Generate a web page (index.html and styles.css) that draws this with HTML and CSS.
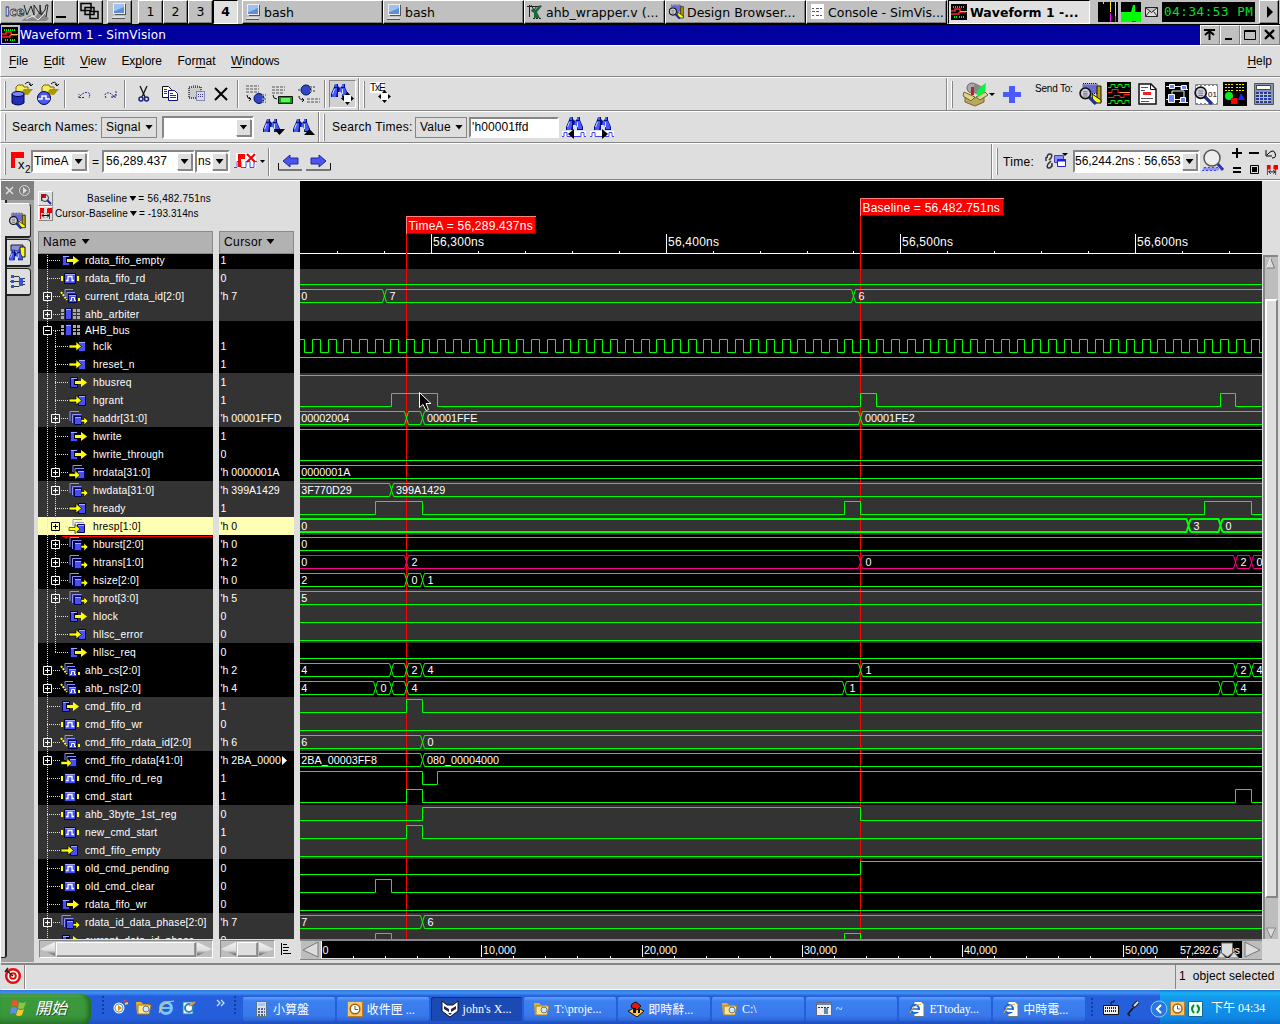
FILE: index.html
```
<!DOCTYPE html>
<html lang="zh-Hant">
<head>
<meta charset="utf-8">
<title>Waveform 1 - SimVision</title>
<link rel="stylesheet" href="styles.css">
</head>
<body>
<svg class="defs" width="0" height="0">
  <symbol id="pc" viewBox="0 0 16 16"><path fill="#eee" d="M2 0h12v11H2z"/><path fill="#5c8fd8" d="M3 1h10v9H3z"/><path fill="#9cc0f0" d="M3 1h10v3L4 8H3z"/><path fill="#555" d="M14 1h1v10h-1zM4 11h11v1H4z"/><path fill="#ddd" d="M2 13h11l1 2H1z"/><path stroke="#555" d="M1 15.500h13"/></symbol>
  <symbol id="wavei" viewBox="0 0 24 24"><path d="M0 0h24v24H0z"/><path fill="none" stroke="#0e0" d="M1 5.500h3v-3h4v3h3v-3h4v3h3v-3h4v3M1 21.500h3v-3h4v3h3v-3h4v3h3v-3h4v3"/><path fill="none" stroke="#f22" d="M1 10.500h4v-3h6v3h6M1 15.500h6v-2h6v2h4v-3h6"/><path stroke="#fa4" d="M13 10.500h10"/></symbol>
  <symbol id="wmini" viewBox="0 0 16 16"><path d="M0 0h16v16H0z"/><path stroke="#0e0" stroke-width="2" stroke-dasharray="1 1" d="M2 3h12M3 13h3M8 13h5"/><path fill="none" stroke="#f22" stroke-width="1.500" d="M0 7h4V5h5v3h6M0 10h8v-2"/><path stroke="#fa4" d="M9 7.500h7"/></symbol>
  <symbol id="bino" viewBox="0 0 17 15"><path fill="#001080" d="M4 1h3v2l2 2 2-2V1h3v3l3 7v3h-6V9H7v5H0v-3l3-7z"/><path fill="#4858ff" d="M4 1h2v3H4zM11 1h2v3h-2zM3 5h3v4l-1 5H1v-3zM9 5h5l2 6v2h-4l-2-4H8z"/><path stroke="#cde" d="M3.500 6l-2 5M11.500 6v5"/></symbol>
  <symbol id="mag" viewBox="0 0 17 17"><path stroke="#223090" stroke-width="3" d="M9 9l7 7"/><circle cx="6" cy="6" r="5" fill="#ccd" stroke="#111" stroke-width="1.500"/><path stroke="#777" d="M4 4.500h4M4 6.500h4M4 8.500h4"/></symbol>
  <symbol id="dbr" viewBox="0 0 24 24"><path fill="#99c" stroke="#111" stroke-dasharray="1 1" d="M5 1.500h14v10H5z"/><path fill="#6a6ad0" d="M6 3h12v8H6z"/><path fill="#b8a000" stroke="#111" d="M19 4h4v16h-4z"/><path fill="#ff0" stroke="#111" d="M14 12l9 6v3h-8z"/><use href="#mag" x="1" y="5" width="18" height="18"/></symbol>
  <symbol id="clock" viewBox="0 0 16 16"><path fill="#f4c870" stroke="#c07818" d="M.5.5h15v15H.5z"/><circle cx="8" cy="8" r="4.800" fill="#fff" stroke="#a06018" stroke-width="1.500"/><path fill="none" stroke="#805010" d="M8 5v3.500h3"/></symbol>
  <symbol id="fold" viewBox="0 0 16 16"><path fill="#e8b028" d="M0 2h5l2 2h6v10H1z"/><path fill="#ffe898" stroke="#b07a18" d="M2 5h13l-2 9H2z"/><circle cx="10" cy="9" r="3" fill="#cfeaff" stroke="#678"/></symbol>
  <symbol id="ie" viewBox="0 0 16 16"><path fill="#fff" stroke="#678" d="M5 .5h7l3 3v12H5z"/><circle cx="6" cy="8" r="4" fill="#fff" stroke="#1668d8" stroke-width="2"/><path stroke="#1668d8" stroke-width="1.500" d="M3 8h7"/><path stroke="#fff" stroke-width="2" d="M7 10h5"/><path fill="none" stroke="#e8b838" d="M1 12Q4 4 12 3"/></symbol>
  <symbol id="rflag" viewBox="0 0 13 13"><path fill="#e00" d="M1 1h4v5H2v6H1zM9 1h4v5h-2v6H10V6H8V2z"/><path stroke="#111" fill="none" d="M3 8.500h7M5 6.500l-2 2 2 2M8 6.500l2 2-2 2"/></symbol>
  <symbol id="mover" viewBox="0 0 13 13"><path fill="#fff" d="M3 3h7v7H3z"/><path d="M6.500 0L9 3H4zM6.500 13L9 10H4zM0 6.500L3 4v5zM13 6.500L10 4v5z"/></symbol>
</svg>

<div class="icebar">
  <div class="ib" style="width:53px"><svg width="51" height="22"><text x="4" y="15" class="logo1">Ice</text><path fill="#888" d="M20 20l9-6 4 3 7-8 8 9-3 2z"/><path fill="none" stroke="#222" d="M23 4l3 10 4-9 3 9V4l6 9V4l1 10 4-5 1-5h2l-2 12"/><path stroke="#eee" fill="none" d="M25 18l7-3 5 4 7-7"/></svg></div>
  <div class="ib" style="width:25px"><svg width="23" height="22"><path d="M2 15h10v2H2z"/></svg></div>
  <div class="ib" style="width:25px"><svg width="23" height="22"><g fill="#c0c0c0" stroke="#000" stroke-width="1.500"><path d="M2 2.500h10v7H2zM6 6.500h9v7H6zM11 10.500h8v7h-8z"/></g></svg></div>
  <div class="ib term"><svg width="23" height="22"><use href="#pc" x="3" y="2" width="16" height="16"/></svg></div>
  <div class="ib ws">1</div><div class="ib ws">2</div><div class="ib ws">3</div><div class="ib ws on">4</div>
  <div class="tasks">
    <div class="ib task"><svg width="16" height="16"><use href="#pc" width="16" height="16"/></svg>bash</div>
    <div class="ib task"><svg width="16" height="16"><use href="#pc" width="16" height="16"/></svg>bash</div>
    <div class="ib task"><svg width="16" height="16"><path stroke="#222" fill="none" d="M0 2.500h14M2.500 1v12M4 1l3 5 3-4"/><path fill="#176a35" d="M5 5l3 1 5-5 2 1-5 6 3 6H7V9L4 7z"/><path stroke="#222" stroke-dasharray="2 1" d="M6 14.500h8"/></svg>ahb_wrapper.v (...</div>
    <div class="ib task"><svg width="16" height="16"><use href="#dbr" width="16" height="16"/></svg>Design Browser...</div>
    <div class="ib task"><svg width="16" height="16"><path fill="#fff" d="M2 0h13v15H2z"/><path stroke="#557" stroke-dasharray="3 1" d="M3 4.500h2m2 0h6M3 7.500h8M3 11.500h2m2 0h6"/></svg>Console - SimVis...</div>
    <div class="ib task on"><svg width="16" height="16"><use href="#wmini" width="16" height="16"/></svg>Waveform 1 -...</div>
  </div>
  <div class="tray">
    <svg width="66" height="24"><path d="M5 2h20v20H5zM28 2h20v20H28z"/><path stroke="#ee0" d="M10.500 2v2M17.500 2v10M22.500 2v14"/><path stroke="#f0f" d="M17.500 13v9M22.500 16v6"/><path fill="#0f0" d="M28 12h10l2-7h2v7h6v10H28z"/><path stroke="#c00" d="M39 21.500h4"/><path fill="#ddd" stroke="#222" d="M52.500 7.500h12v9h-12zl6 5 6-5M52.500 16.500l4-5m8 5l-4-5"/></svg>
    <div class="iclock">04:34:53 PM</div>
    <div class="ib go"><svg width="18" height="22"><path d="M7 5l6 6-6 6z"/></svg></div>
  </div>
</div>

<div class="title"><svg width="19" height="19"><path fill="#c0c0c0" d="M0 0h19v19H0z"/><use href="#wmini" x="1" y="2" width="16" height="16"/></svg><span>Waveform 1 - SimVision</span>
  <div class="wb"><svg width="17" height="17"><path stroke="#000" stroke-width="2" fill="none" d="M3 4h11M8.500 5v9M4 9l4.500-4L13 9"/></svg></div>
  <div class="wb"><svg width="17" height="17"><path stroke="#000" stroke-width="2" d="M4 13h7"/></svg></div>
  <div class="wb"><svg width="17" height="17"><path stroke="#000" fill="none" d="M3.500 4.500h11v9h-11zM3.500 5.500h11"/></svg></div>
  <div class="wb"><svg width="17" height="17"><path stroke="#000" stroke-width="2.300" d="M4 4l9 9M13 4l-9 9"/></svg></div>
</div>

<div class="menu"><span><u>F</u>ile</span><span><u>E</u>dit</span><span><u>V</u>iew</span><span>Ex<u>p</u>lore</span><span>For<u>m</u>at</span><span><u>W</u>indows</span><span class="help"><u>H</u>elp</span></div>

<div class="bar bar1">
  <i class="grip"></i>
  <svg width="26" height="32" class="m5"><path fill="#f5ec60" stroke="#776800" d="M6 9l2-2h5l1 2h4v6H6z"/><path fill="#a89800" d="M10 16l4-5h9l-5 6z"/><path fill="none" stroke="#111" d="M15 6q4-4 6 1m-2-1l2 2 2-2"/><path fill="#2030b0" stroke="#000060" d="M2 16h12v9q-6 4-12 0z"/><ellipse cx="8" cy="16" rx="6" ry="2.500" fill="#7888f8" stroke="#000060"/></svg>
  <svg width="28" height="32"><path fill="#f5ec60" stroke="#776800" d="M6 9l2-2h5l1 2h4v6H6z"/><path fill="#a89800" d="M10 16l4-5h9l-5 6z"/><path fill="none" stroke="#111" d="M15 6q4-4 6 1m-2-1l2 2 2-2"/><circle cx="8" cy="20" r="6.500" fill="#4a5af0" stroke="#000060"/><path fill="none" stroke="#fff" stroke-width="1.500" d="M2 21h4v-3h4v3h4"/></svg>
  <i class="sep"></i>
  <svg width="58" height="32"><g fill="none" stroke="#28288c" stroke-dasharray="2 1"><path d="M13 20v-4M13 19.500h5M14 18q6-6 10-2l-1 4M40 20q-3-6 4-5l5 4M50 13v6h-5M50 16l-4 4"/></g></svg>
  <i class="sep"></i>
  <svg width="32" height="32"><path stroke="#111" stroke-width="1.300" fill="none" d="M14 8l5 11M21 8l-5 11"/><g fill="none" stroke="#202080" stroke-width="1.500"><circle cx="15" cy="21" r="2"/><circle cx="20.500" cy="21" r="2"/></g></svg>
  <svg width="27" height="32"><g fill="#fff" stroke="#111"><path d="M4.500 8.500h6l3 3v8h-9z"/><path stroke="#101080" d="M10.500 12.500h6l3 3v7h-9z"/></g><path stroke="#334" d="M6 11.500h3M6 13.500h3M6 15.500h3M12 15.500h3M12 17.500h6M12 19.500h6"/></svg>
  <svg width="25" height="32"><g stroke-dasharray="1 1" stroke="#555" fill="none"><path fill="#ccc" stroke-width="2" d="M4 9h12v11H4z"/><path stroke="#882" d="M8 7.500h5"/><path stroke="#338" fill="#ddd" d="M11.500 13.500h8v9h-8zM13 16.500h5M13 18.500h5"/></g></svg>
  <svg width="27" height="32"><path stroke="#000" stroke-width="2" d="M5 10l12 12M17 10L5 22"/></svg>
  <i class="sep"></i>
  <svg width="85" height="32"><g stroke="#999" stroke-width="2" stroke-dasharray="3 1"><path d="M7 8h13M7 11h13M7 14h13M33 9h13M33 12h13M33 15h12M68 21h13M68 24h13"/></g><g fill="#3048c8" stroke="#001060"><circle cx="20" cy="20.500" r="5"/><circle cx="67" cy="12" r="5"/></g><path stroke="#888" stroke-dasharray="2 1" stroke-width="2" d="M23 17h4m-4 4h4m-4 3h4M71 9h5m-5 4h5M59 12h3"/><path fill="none" stroke="#111" d="M8 17q0 4 4 4m-2-2l2 2-2 2M34 17q0 4 4 4M60 18q0 4 5 4m-2-2l2 2-2 2"/><path fill="#0a0" stroke="#111" d="M39.500 18.500h14v7h-14z"/><path fill="#6e6" d="M42 20h9v4h-9z"/></svg>
  <i class="sep"></i>
  <div class="press"><svg width="26" height="26"><use href="#bino" x="1" y="2" width="17" height="15"/><use href="#mover" x="11" y="11" width="13" height="13"/></svg></div>
  <i class="sep tall"></i><i class="grip m4"></i>
  <svg width="30" height="32"><path fill="#fff" d="M5 4h14v11H5z"/><text x="5" y="13" class="txe">TxE</text><use href="#mover" x="13" y="12" width="13" height="13"/></svg>
  <div class="right r1"><i class="sep tall"></i><i class="grip m4"></i>
    <svg width="46" height="32"><path fill="#b8a860" stroke="#776828" d="M8 16l10 4 9-4v8l-9 4-10-4z"/><path fill="#ddd090" stroke="#776828" d="M7 14l11 5-4 4-8-5zM19 19l9-5 3 3-8 5z"/><circle cx="15" cy="10" r="5" fill="#aaa" stroke="#666"/><path fill="#888" d="M18 5l6 3-3 9-6-3z"/><path fill="#1e4" d="M23 9l6-4-1 8-6 6-3-4z"/><path fill="#c02020" d="M14 9h3v8h-3z"/><path d="M32 15h6l-3 3z"/></svg>
    <svg width="32" height="32"><path fill="#4a5aff" d="M7 8h6v6h6v5h-6v6H7v-6H1v-5h6z" transform="translate(-1)"/></svg>
    <span class="send">Send To:</span>
    <svg width="29" height="32"><use href="#dbr" y="4" width="24" height="24"/></svg>
    <svg width="29" height="32"><use href="#wavei" y="4" width="24" height="24"/></svg>
    <svg width="29" height="32"><path fill="#fff" stroke="#111" stroke-width="1.500" d="M3 6h12l5 5v15H3z"/><path fill="none" stroke="#111" d="M14.500 6v5.500H20"/><path stroke="#555" d="M5 9.500h7M5 12.500h4M5 20.500h12M5 23.500h8"/><path fill="#e22" d="M7 14h8v3H7z"/></svg>
    <svg width="29" height="32"><path d="M0 4h24v24H0z"/><path stroke="#eee" fill="none" d="M1 8.500h5m4 0h6v3h7M7 16v-3h12v6M1 21.500h20M14 24.500h9"/><path fill="#68f" stroke="#fff" d="M4.500 6.500h5v4h-5zM16.500 7.500h5v4h-5zM3.500 16.500h6v8h-6zM15.500 19.500h5v5h-5z"/></svg>
    <svg width="29" height="32"><path fill="#fff" stroke="#888" d="M1.500 6.500h22v20h-22z"/><path stroke="#888" stroke-width="2" stroke-dasharray="2 2" d="M2 7h21M2 26h21"/><text x="14" y="19" class="tiny">01</text><use href="#mag" y="8" width="19" height="19"/></svg>
    <svg width="30" height="32"><path d="M0 4h24v24H0z"/><g stroke="#ee0" stroke-dasharray="2 1"><path d="M2 6.500h9M13 6.500h9M2 9.500h9M13 9.500h9M2 12.500h9M13 12.500h9"/></g><circle cx="6" cy="18" r="4" fill="#0e2"/><path fill="#22f" d="M18 15l4 7h-7z"/><path fill="#f00" d="M8 20h6v6H8z"/></svg>
    <svg width="27" height="32"><path fill="#8a94a8" stroke="#555" d="M1.500 5.500h19v21h-19z"/><path fill="#fff" stroke="#444" d="M3.500 7.500h14v4h-14z"/><path fill="#223a9a" d="M3 14h15v11H3z"/><path stroke="#b8c0d8" d="M3 16.500h15M3 19.500h15M3 22.500h15M6.500 14v11M10.500 14v11M14.500 14v11"/></svg>
  </div>
</div>

<div class="bar bar2">
  <i class="grip"></i><span class="lab sn">Search Names:</span>
  <div class="opt o1">Signal<b class="dn"></b></div>
  <div class="combo c1"><span></span><em><b class="dn"></b></em></div>
  <svg width="30" height="30"><use href="#bino" x="1" y="6" width="17" height="15"/><path d="M12 17h11l-5.500 6z"/></svg>
  <svg width="26" height="30"><use href="#bino" x="1" y="6" width="17" height="15"/><path d="M12 23h11l-5.500-6z"/></svg>
  <i class="sep tall"></i><i class="grip m4"></i><span class="lab st">Search Times:</span>
  <div class="opt o2">Value<b class="dn"></b></div>
  <div class="inp">'h00001ffd</div>
  <svg width="28" height="30"><use href="#bino" x="4" y="4" width="17" height="15"/><path fill="#fff" d="M0 19h24v6H0z"/><path fill="none" stroke="#44f" d="M0 24.500h2v-4h3v4h9m0 0h5v-4h3v4h2"/><path d="M12 17v10l-6-5z"/></svg>
  <svg width="28" height="30"><use href="#bino" x="4" y="4" width="17" height="15"/><path fill="#fff" d="M0 19h24v6H0z"/><path fill="none" stroke="#44f" d="M0 24.500h2v-4h3v4h9m0 0h5v-4h3v4h2"/><path d="M12 17v10l6-5z"/></svg>
</div>

<div class="bar bar3">
  <i class="grip"></i>
  <svg width="25" height="32"><path fill="#f00" d="M5 6h13v6H9v10H5z"/><text x="12" y="23" class="subx">x</text><text x="19" y="27" class="sub">2</text></svg>
  <div class="combo c2"><span>TimeA</span><em><b class="dn"></b></em></div><span class="eq">=</span>
  <div class="combo c3"><span>56,289.437</span><em><b class="dn"></b></em></div>
  <div class="combo c4"><span>ns</span><em><b class="dn"></b></em></div>
  <svg width="38" height="32"><path fill="#fff" d="M6 7h20v15H6z"/><path fill="none" stroke="#44f" d="M4 21.500h3v-6h4v6h5v-6h4v6h4v-6h3"/><path fill="#f00" d="M8 8h7v5h-4v8H8z"/><path stroke="#e00" stroke-width="2" d="M17 8l8 8M25 8l-8 8"/><path d="M30 14h5l-2.500 3z"/></svg>
  <i class="sep"></i>
  <svg width="64" height="32"><g fill="#4a54f0" stroke="#2028a0"><path d="M13 15l7-6v3h8v6h-8v3zM56 15l-7-6v3h-8v6h8v3z"/></g><path fill="none" stroke="#111" d="M8.500 17v7H32M60.500 17v7H36"/></svg>
  <div class="right r3"><i class="sep tall"></i><i class="grip m4"></i><span class="lab ti">Time:</span>
    <svg width="28" height="32"><path fill="none" stroke="#333" stroke-width="1.500" d="M2 12q0-4 3-4t1 4l-2 2M7 17q0 5-3 5t-1-4l3-3M1 11v4m6 2v4"/><path fill="#8890ff" stroke="#44a" d="M9.500 9.500h9v7h-9z"/><path fill="#fff" stroke="#22c" d="M12.500 13.500h8v7h-8z"/><path stroke="#22c" stroke-width="2" d="M12 14.500h9"/><path d="M17 7h6l-3 3z"/></svg>
    <div class="combo c5"><span>56,244.2ns : 56,653</span><em><b class="dn"></b></em></div>
    <svg width="80" height="36"><path stroke="#2838c0" stroke-width="3" d="M16 18l7 8"/><circle cx="12" cy="14" r="8" fill="#eee" stroke="#555" stroke-width="1.500"/><path fill="none" stroke="#44f" d="M2 26.500h2v-3h2v3h2v-3h2v3h2v-3h2v3h2v-3h2v3"/><path stroke="#000" stroke-width="2" d="M32 9h10M37 4v10M49 9h10M33 24h8M33 28h8"/><path fill="none" stroke="#000" d="M66 6v6h6M67 11q6-7 8-2t-3 5M50.500 21.500h8v8h-8z"/><path d="M52 23h5v5h-5z"/><use href="#rflag" x="66" y="20" width="12" height="12"/></svg>
  </div>
</div>

<div class="main">
  <div class="side">
    <div class="sidehead"><svg width="34" height="19"><path stroke="#ddd" stroke-width="1.500" fill="none" d="M5 6l7 7m0-7l-7 7"/><circle cx="23.500" cy="9.500" r="5" fill="none" stroke="#ddd"/><path fill="#ddd" d="M22 6l4 3.500-4 3.500z"/></svg></div>
    <div class="sidebody">
      <div class="lip"></div>
      <div class="tabs">
        <div class="tab first"><svg width="22" height="26"><use href="#dbr" x="3" y="4" width="18" height="18"/></svg></div>
        <div class="tab"><svg width="20" height="22"><path fill="#8890e0" stroke="#222" d="M4 3h12v6H4z"/><path fill="#ff0" stroke="#111" d="M13 5h5v10h-5z"/><use href="#bino" x="2" y="7" width="14" height="12"/></svg></div>
        <div class="tab"><svg width="20" height="22"><path fill="none" stroke="#333" d="M5 5.500h7l2 4M3 10.500h15M5 15.500h7l2-4M15 7.500h3M15 13.500h3"/><path fill="#35c" d="M4 4h3v3H4zM4 9h3v3H4zM4 14h3v3H4zM12 7h4v8h-4z"/></svg></div>
      </div>
    </div>
  </div>
  <div class="names">
    <div class="info">
      <div><i class="sq"><svg width="13" height="13"><path fill="#e00" d="M2 2h5v4H3v3H2z"/><circle cx="6" cy="6" r="3.500" fill="none" stroke="#333"/><path stroke="#22a" stroke-width="2" d="M8 8l4 4"/></svg></i><span class="bl">Baseline<b class="dn"></b>= 56,482.751ns</span></div>
      <div><i class="sq"><svg width="13" height="13"><use href="#rflag" width="13" height="13"/></svg></i><span class="cb">Cursor-Baseline<b class="dn"></b>= -193.314ns</span></div>
    </div>
    <div class="cols">
      <div class="col cn"><div class="hd">Name<b class="dn"></b></div><div class="list" id="names"></div>
        <div class="hs"><b class="lf"></b><div class="thumb"></div><b class="rt"></b></div></div>
      <div class="col cv"><div class="hd">Cursor<b class="dn"></b></div><div class="list" id="vals"></div>
        <div class="hsrow"><div class="hs"><b class="lf"></b><div class="thumb"></div><b class="rt"></b></div><svg width="14" height="16"><path stroke="#000" d="M1.500 2v12M3 3.500h4M3 6.500h6M3 9.500h5M3 12.500h8"/></svg></div></div>
    </div>
  </div>
  <div class="waves">
    <div class="wtop"><svg id="wave" width="962" height="758" viewBox="300 181 962 758"></svg>
      <div class="vs"><div class="vtrack"><svg width="13" height="12"><path fill="#ddd" stroke="#777" d="M5.500 1l4 10h-8z"/><path stroke="#fff" d="M5.500 1l-4 10"/></svg><div class="vthumb"></div><svg class="vd" width="13" height="12"><path fill="#ddd" stroke="#888" d="M1.500 1h9l-4.500 10z"/></svg></div></div></div>
    <div class="wbot"><svg id="ruler" width="980" height="21" viewBox="300 939 980 21"></svg></div>
  </div>
</div>

<div class="status"><div class="tgt"><svg width="22" height="22"><circle cx="12" cy="11" r="6.800" fill="#fff" stroke="#e01010" stroke-width="2.500"/><circle cx="12" cy="11" r="2.800" fill="#fff" stroke="#e01010" stroke-width="2"/><path stroke="#222" stroke-width="1.500" d="M5 5l7 6M4 7l3-4"/></svg></div><div class="msg"></div><div class="count">1&nbsp; object selected</div></div>

<div class="xp">
  <div class="start"><svg width="20" height="20"><path fill="#e8562a" d="M3 3q3-2 6 0L8 9Q5 7 2 9z"/><path fill="#8cc63c" d="M10 4q3 2 7 0l-2 6q-3 2-6 0z"/><path fill="#5a8ff0" d="M2 10q3-2 6 0l-1 6q-3-2-6 0z"/><path fill="#f8c828" d="M9 11q3 2 6 0l-2 6q-3 2-6 0z"/></svg><span>開始</span></div>
  <svg class="ql" width="150" height="34"><path stroke="#163c9c" stroke-width="2" stroke-dasharray="2 2" d="M12 8v20M144 8v20"/><circle cx="28" cy="20" r="5.500" fill="#eef"/><circle cx="28" cy="20" r="4" fill="#fff" stroke="#5ab"/><path fill="#e80" d="M27 17l4 3-4 3z"/><path stroke="#f33" stroke-width="2" d="M32 14l3-2"/><path stroke="#fc3" stroke-width="2" d="M34 16l3-1"/><use href="#fold" x="45" y="12" width="16" height="16"/><circle cx="75" cy="20" r="5.500" fill="none" stroke="#78c8ff" stroke-width="3"/><path stroke="#78c8ff" stroke-width="2" d="M71 20h9"/><path fill="none" stroke="#fc4" d="M68 25q3-12 15-12"/><path fill="#fff" stroke="#1a7ab8" d="M92 14h10v12H92z"/><circle cx="98" cy="20" r="4" fill="none" stroke="#28b" stroke-width="2"/><path stroke="#e93" stroke-width="2" d="M98 18l6-4"/><path fill="none" stroke="#cde" stroke-width="1.300" d="M126 12l3 3-3 3m4-6l3 3-3 3"/></svg>
  <div class="xtasks">
    <div class="xt"><svg width="16" height="16"><path fill="#dde" stroke="#578" d="M3.500.5h10v15h-10z"/><path fill="#9cf" d="M5 2h7v3H5z"/><path stroke="#568" stroke-width="2" stroke-dasharray="2 1" d="M5 8h7M5 11h7M5 14h7"/></svg>小算盤</div>
    <div class="xt"><svg width="16" height="16"><use href="#clock" width="16" height="16"/></svg>收件匣 ...</div>
    <div class="xt on"><svg width="18" height="18"><path fill="#fff" stroke="#111" d="M1 1l5 4h6l5-4v10l-8 6-8-6z"/><path fill="#225" d="M3 6l5 3v3L3 9zM15 6l-5 3v3l5-3zM7 13h4l-2 2z"/></svg>john's X...</div>
    <div class="xt"><svg width="16" height="16"><use href="#fold" width="16" height="16"/></svg>T:\proje...</div>
    <div class="xt"><svg width="16" height="16"><path fill="#fc4" stroke="#111" d="M0 10l8-4 8 4-7 6z"/><path fill="#e11" stroke="#111" d="M4 3l4-2 5 4-4 4-6-3z"/><path fill="#111" d="M5 7h3v5H5zM10 8h2v4h-2z"/></svg>即時辭...</div>
    <div class="xt"><svg width="16" height="16"><use href="#fold" width="16" height="16"/></svg>C:\</div>
    <div class="xt"><svg width="16" height="16"><path fill="#eee" stroke="#668" d="M.5 1.500h15v13H.5z"/><path fill="#68a" d="M1 2h14v2H1zM8 7h4v6H8z"/><path stroke="#333" stroke-dasharray="2 1" d="M2 6.500h12"/></svg>~</div>
    <div class="xt"><svg width="16" height="16"><use href="#ie" width="16" height="16"/></svg>ETtoday...</div>
    <div class="xt"><svg width="16" height="16"><use href="#ie" width="16" height="16"/></svg>中時電...</div>
  </div>
  <svg width="67" height="34"><path stroke="#163c9c" stroke-width="2" stroke-dasharray="2 2" d="M7 8v20"/><path fill="#eee" stroke="#111" d="M18.500 15.500h15v9h-15z"/><path stroke="#222" stroke-dasharray="1 1" stroke-width="2" d="M20 18h12M20 21h12"/><path fill="none" stroke="#111" d="M26 15v-3h3v-2"/><path stroke="#222" stroke-width="4" d="M48 17l5-5"/><path stroke="#ddd" stroke-width="2" d="M49 16l4-4"/><path fill="none" stroke="#111" stroke-width="1.500" d="M48 18l-5 6 2 2"/></svg>
  <div class="xtray"><svg width="50" height="34"><circle cx="7" cy="19" r="8" fill="#2878e0" stroke="#8cc8ff"/><path fill="none" stroke="#fff" stroke-width="2" d="M9 15l-4 4 4 4"/><use href="#clock" x="18" y="11" width="15" height="15"/><path fill="#e8fff0" stroke="#169" d="M36.500 11.500h14v15h-14z"/><path fill="none" stroke="#083" stroke-width="2" d="M42 15q-4 4 0 8M45 15q4 4 0 8"/></svg><span>下午 04:34</span></div>
</div>
<script src="script.js"></script>
</body>
</html>
```
FILE: styles.css
```
* { box-sizing: border-box; }
body { margin: 0; width: 1280px; height: 1024px; overflow: hidden; background: #dedede; color: #000; font: 12px "Liberation Sans", sans-serif; display: flex; flex-direction: column; }
svg { display: block; flex: none; }
.defs { position: absolute; }
i, em, b { font-style: normal; }
.dn { display: inline-block; width: 8px; height: 5px; background: #000; clip-path: polygon(0 0, 100% 0, 50% 100%); }

.icebar { height: 25px; flex: none; display: flex; background: #c0c0c0; border-bottom: 1px solid #000; font: 12.5px "DejaVu Sans", sans-serif; }
.ib { height: 24px; flex: none; background: #c0c0c0; border: 1px solid; border-color: #fff #000 #000 #fff; box-shadow: inset -1px -1px #808080; overflow: hidden; white-space: nowrap; }
.term { width: 25px; margin-left: 4px; }
.ws { width: 25px; text-align: center; line-height: 22px; }
.term + .ws { margin-left: 6px; }
.ib.on { background: #e0e0e0; font-weight: bold; border-color: #000 #fff #fff #000; box-shadow: none; }
.tasks { display: flex; margin-left: 4px; }
.task { width: 141px; display: flex; align-items: center; gap: 3px; padding-left: 2px; }
.task.on { width: 142px; margin-left: 1px; }
.tray { display: flex; margin-left: 3px; }
.iclock { width: 93px; height: 20px; margin: 2px 4px 0 3px; background: #000; color: #00e030; font: 12.5px/19px "DejaVu Sans Mono", monospace; letter-spacing: .6px; padding-left: 2px; white-space: nowrap; overflow: hidden; }
.tray > svg { width: 66px; }
.go { width: 20px; }
.logo1 { font: bold 12px "DejaVu Sans", sans-serif; fill: #eee; stroke: #333; stroke-width: .8px; }

.title { height: 20px; flex: none; background: #0000a0; color: #fff; font: 12px/20px "DejaVu Sans", sans-serif; letter-spacing: .15px; display: flex; padding-left: 1px; }
.title span { flex: 1; }
.wb { width: 20px; height: 20px; background: #c0c0c0; border: 1px solid; border-color: #fff #808080 #808080 #fff; }

.menu { height: 32px; flex: none; border: 0 solid #fff; border-width: 1px 0 1px 1px; border-bottom-color: #868686; padding: 0 8px; display: flex; gap: 15.6px; line-height: 31px; letter-spacing: -.02px; }
.menu .help { margin-left: auto; }
.menu u { text-underline-offset: 2px; }

.bar { flex: none; display: flex; align-items: center; border-top: 1px solid #fff; border-bottom: 1px solid #868686; border-left: 1px solid #fff; overflow: hidden; padding-left: 3px; }
.bar1 { height: 34px; }
.bar2 { height: 32px; }
.bar3 { height: 37px; }
.grip { width: 2px; height: 27px; border-left: 1px solid #fff; border-right: 1px solid #868686; flex: none; }
.sep { width: 2px; height: 28px; border-left: 1px solid #868686; border-right: 1px solid #fff; flex: none; }
.sep.tall { height: 40px; }
.m4 { margin-left: 3px; } .m5 { margin-left: 4px; }
.press { width: 27px; height: 28px; margin: 0 2px 0 3px; border: 1px solid; border-color: #868686 #fff #fff #868686; background: #d0d0d0; }
.right { display: flex; align-items: center; height: 100%; margin-left: auto; }
.r1 svg:first-of-type { margin-left: 4px; }
.send { font-size: 10px; width: 43px; padding: 0 0 12px 0; white-space: nowrap; letter-spacing: -.2px; }
.txe { font: 10px "Liberation Sans", sans-serif; letter-spacing: -1px; }
.tiny { font: 8px "Liberation Sans", sans-serif; }
.sub { font: 10px "Liberation Sans", sans-serif; }
.subx { font: 13px "Liberation Sans", sans-serif; }
.lab { white-space: nowrap; letter-spacing: .45px; }
.sn { width: 94px; padding-left: 6px; letter-spacing: .25px; }
.st { width: 89px; padding-left: 7px; letter-spacing: .3px; }
.sn, .st { flex: none; }
.ti { width: 47px; padding-left: 5px; letter-spacing: .3px; }
.opt { height: 21px; border: 1px solid #868686; flex: none; display: flex; align-items: center; justify-content: space-between; padding: 0 3px 0 4px; letter-spacing: .2px; }
.o1 { width: 56px; margin-left: 1px; } .o2 { width: 52px; margin-left: 1px; }
.combo { height: 23px; background: #fff; border: 2px solid; border-color: #868686 #fff #fff #868686; display: flex; flex: none; }
.combo span { flex: 1; padding-left: 1px; line-height: 19px; overflow: hidden; white-space: nowrap; letter-spacing: .1px; }
.combo em { flex: none; width: 15px; background: #dedede; border: 1px solid; border-color: #fff #868686 #868686 #fff; display: flex; align-items: center; justify-content: center; box-shadow: 1px 1px #868686; margin: 1px; }
.c1 { width: 92px; margin: 0 8px 0 5px; }
.c2 { width: 58px; } .c3 { width: 93px; } .c4 { width: 35px; } .c5 { width: 127px; }
.c3 span { padding-left: 2px; }
.c5 span { letter-spacing: -.02px; padding-left: 0; }
.eq { width: 13px; text-align: center; flex: none; }
.inp { width: 90px; height: 21px; background: #fff; border: 2px solid; border-color: #868686 #fff #fff #868686; line-height: 16px; padding-left: 1px; margin: 0 3px 0 2px; letter-spacing: .1px; flex: none; }

.main { flex: none; height: 782px; display: flex; border-top: 1px solid #fff; border-left: 1px solid #fff; }
.side { width: 33px; display: flex; flex-direction: column; background: #a2a2a2; }
.sidehead { height: 19px; background: #808080; flex: none; }
.sidebody { flex: 1; display: flex; margin-bottom: 4px; }
.lip { width: 6px; background: #dedede; border-right: 2px solid #222; border-bottom: 1px solid #222; border-radius: 0 0 3px 0; flex: none; }
.tabs { padding-top: 3px; display: flex; flex-direction: column; gap: 1px; }
.tab { width: 24px; height: 28px; background: #dedede; border: 0 solid #222; border-width: 1px 1px 2px 0; border-radius: 0 4px 3px 0; padding-top: 2px; }
.tab.first { width: 26px; height: 35px; padding-top: 4px; margin-left: -2px; border-top-color: #fff; }
.names { width: 266px; padding: 10px 0 0 4px; display: flex; flex-direction: column; }
.info { height: 40px; }
.info > div { display: flex; height: 15px; align-items: center; white-space: nowrap; font-size: 10px; }
.info .dn { margin: 0 2px 1px; width: 7px; }
.sq { width: 15px; height: 15px; border: 1px solid; border-color: #fff #868686 #868686 #fff; }
.bl { padding-left: 34px; letter-spacing: .25px; } .cb { padding-left: 2px; letter-spacing: .08px; }
.cols { display: flex; gap: 6px; }
.cn { width: 175px; } .cv { width: 75px; }
.hd { height: 23px; background: #b2b2b2; border: 1px solid #8a8a8a; padding-left: 4px; line-height: 21px; letter-spacing: .4px; }
.hd .dn { margin: 0 0 2px 5px; }
.cv .hd .dn { margin-left: 4px; }
.list { height: 685px; overflow: hidden; background: #000; color: #fff; font-size: 10.3px; }
.row { height: 18px; display: flex; position: relative; }
.row.short { height: 16px; }
.row.cut { margin-top: -3px; }
.g { background: #333; }
.row.picked { background: #ffffb4; color: #000; }
.row span { line-height: 20px; white-space: pre; letter-spacing: .2px; }
.cv .row span { padding-left: 1.500px; line-height: 18px; font-size: 10.6px; letter-spacing: 0; }
.cv .row svg { margin-left: 1px; }
.drop { position: absolute; left: 24px; right: 0; top: 1px; height: 1px; background: #f00; z-index: 2; }
.drop::before { content: ""; position: absolute; left: 1px; top: 0; border: 3px solid transparent; border-top-color: #f00; border-bottom: 0; }
.hs { height: 18px; margin: 1px 0 0 1px; display: flex; align-items: center; background: #bdbdbd; border: 1px solid; border-color: #868686 #fff #fff #868686; }
.hs b { width: 15px; height: 14px; background: linear-gradient(#f4f4f4, #ddd 60%, #808080 85%); }
.lf { clip-path: polygon(0 50%, 100% 0, 100% 100%); } .rt { clip-path: polygon(100% 50%, 0 0, 0 100%); }
.hs .thumb { flex: 1; height: 15px; background: #dedede; border: 1px solid; border-color: #fff #868686 #868686 #fff; box-shadow: inset -1px -1px #999; margin: 0 1px; }
.hsrow { display: flex; align-items: center; gap: 5px; }
.hsrow .hs { width: 55px; }
.waves { width: 980px; }
.wtop { display: flex; height: 758px; }
.vs { flex: 1; padding-top: 74px; }
.vtrack { height: 684px; border-left: 2px solid #868686; border-top: 2px solid #868686; margin: 0 3px 0 1px; background: #bdbdbd; display: flex; flex-direction: column; }
.vthumb { margin-top: 30px; height: 599px; background: #dedede; border: 2px solid; border-color: #fff #868686 #868686 #fff; }
.vd { margin-top: auto; }
.wt { fill: #fff; font: 10.8px "Liberation Sans", sans-serif; white-space: pre; }
.wr { fill: #fff; font: 12px "Liberation Sans", sans-serif; letter-spacing: .22px; }

.status { height: 27px; flex: none; display: flex; border-top: 2px solid #868686; border-bottom: 1px solid #fff; margin: 1px 0 0 1px; }
.tgt { width: 24px; border-right: 1px solid #868686; }
.msg { flex: 1; border-left: 1px solid #fff; border-right: 1px solid #868686; }
.count { width: 104px; padding-left: 3px; line-height: 22px; letter-spacing: .12px; white-space: nowrap; }

.xp { flex: 1; display: flex; background: linear-gradient(#3078e0, #4090f4 3px, #265fdc 6px, #245edb 28px, #1c48b0); color: #fff; font: 12px "Liberation Serif", "Noto Sans CJK TC", serif; }
.start { width: 91px; margin: 4px 0 2px; padding: 4px 0 0 9px; display: flex; gap: 6px; border-radius: 0 9px 9px 0; background: linear-gradient(#66b866, #3c9a3c 4px, #3a963a 22px, #2a742a); box-shadow: inset -3px 0 4px #206820; }
.start span { font: italic 16px/19px "Noto Sans CJK TC", sans-serif; text-shadow: 1px 1px #225a22; }
.ql { margin-top: -2px; width: 150px; }
.xtasks { display: flex; gap: 2px; padding: 7px 0 0 2px; width: 844px; }
.xt { flex: 1; height: 24px; display: flex; align-items: center; gap: 4px; padding-left: 10px; border-radius: 2px; background: linear-gradient(#60a0fc, #3c80f0 4px, #3878ec 19px, #2c64d4); white-space: nowrap; overflow: hidden; }
.xt.on { background: #1c4ab4; box-shadow: inset 1px 1px #123480; }
.xtray { flex: 1; margin-left: 8px; display: flex; background: linear-gradient(#1878d8, #18b0f4 3px, #1298ec 8px, #1088e4 28px, #0c60c0); }
.xtray svg { margin-left: -8px; overflow: visible; }
.xtray span { line-height: 37px; padding-left: 9px; white-space: nowrap; }
```
FILE: script.js
```
(() => {
// Signal rows: name, level, icon, cursor value, wave, shade, expander, height
// wave: number = constant bit; {s, e} = start level and edges; {b, t} = bus label and transitions
const rows = [
  ['rdata_fifo_empty', 0, 'out', '1', null, 0],
  ['rdata_fifo_rd', 0, 'sig', '0', 0, 1],
  ['current_rdata_id[2:0]', 0, 'bsig', "'h 7", {b: '0', t: [[384, '7'], [853, '6']]}, 1, '+'],
  ['ahb_arbiter', 0, 'grp', '', null, 1, '+', 16],
  ['AHB_bus', 0, 'grp', '', null, 0, '-', 16],
  ['hclk', 1, 'in', '1', 'clk', 0],
  ['hreset_n', 1, 'in', '1', 1, 0],
  ['hbusreq', 1, 'out', '1', 1, 1],
  ['hgrant', 1, 'in', '1', {s: 0, e: [391, 437, 860, 876, 1220, 1235]}, 1],
  ['haddr[31:0]', 1, 'bout', "'h 00001FFD", {b: '00002004', t: [[406, ''], [422, '00001FFE'], [860, '00001FE2']]}, 1, '+'],
  ['hwrite', 1, 'out', '1', 1, 0],
  ['hwrite_through', 1, 'out', '0', 0, 0],
  ['hrdata[31:0]', 1, 'bin', "'h 0000001A", {b: '0000001A', t: []}, 0, '+'],
  ['hwdata[31:0]', 1, 'bout', "'h 399A1429", {b: '3F770D29', t: [[391, '399A1429']]}, 1, '+'],
  ['hready', 1, 'in', '1', {s: 0, e: [375, 422, 844, 860, 1204, 1251]}, 1],
  ['hresp[1:0]', 1, 'bin', "'h 0", {b: '0', t: [[1188, '3'], [1220, '0']], w: 2}, 2, '+'],
  ['hburst[2:0]', 1, 'bout', "'h 0", {b: '0', t: []}, 0, '+'],
  ['htrans[1:0]', 1, 'bout', "'h 2", {b: '0', t: [[406, '2'], [860, '0'], [1235, '2'], [1251, '0']], c: '#ff0090'}, 0, '+'],
  ['hsize[2:0]', 1, 'bout', "'h 0", {b: '2', t: [[406, '0'], [422, '1']]}, 0, '+'],
  ['hprot[3:0]', 1, 'bout', "'h 5", {b: '5', t: []}, 1, '+'],
  ['hlock', 1, 'out', '0', 0, 1],
  ['hllsc_error', 1, 'in', '0', 0, 1],
  ['hllsc_req', 1, 'out', '0', 0, 0],
  ['ahb_cs[2:0]', 0, 'bsig', "'h 2", {b: '4', t: [[391, ''], [406, '2'], [422, '4'], [860, '1'], [1235, '2'], [1251, '4']]}, 0, '+'],
  ['ahb_ns[2:0]', 0, 'bsig', "'h 4", {b: '4', t: [[375, '0'], [391, ''], [406, '4'], [844, '1'], [1220, ''], [1235, '4']]}, 0, '+'],
  ['cmd_fifo_rd', 0, 'out', '1', {s: 0, e: [406, 422]}, 1],
  ['cmd_fifo_wr', 0, 'sig', '0', 0, 1],
  ['cmd_fifo_rdata_id[2:0]', 0, 'bsig', "'h 6", {b: '6', t: [[422, '0']]}, 1, '+'],
  ['cmd_fifo_rdata[41:0]', 0, 'bin', "'h 2BA_0000", {b: '2BA_00003FF8', t: [[422, '080_00004000']]}, 0, '+'],
  ['cmd_fifo_rd_reg', 0, 'sig', '1', {s: 1, e: [422, 437]}, 0],
  ['cmd_start', 0, 'sig', '1', {s: 0, e: [406, 422, 1235, 1251]}, 0],
  ['ahb_3byte_1st_reg', 0, 'sig', '0', {s: 0, e: [422, 860]}, 1],
  ['new_cmd_start', 0, 'sig', '1', {s: 0, e: [406, 422]}, 1],
  ['cmd_fifo_empty', 0, 'in', '0', 0, 1],
  ['old_cmd_pending', 0, 'sig', '0', {s: 0, e: [860]}, 0],
  ['old_cmd_clear', 0, 'sig', '0', {s: 0, e: [375, 391]}, 0],
  ['rdata_fifo_wr', 0, 'out', '0', 0, 0],
  ['rdata_id_data_phase[2:0]', 0, 'bout', "'h 7", {b: '7', t: [[422, '6']]}, 1, '+'],
  ['current_data_id_phase', 0, 'out', '0', {s: 0, e: [375, 391, 844, 860]}, 1]
];

const stack = '<path fill="none" stroke="#8c90ff" d="M1 11V1.500h9M3.500 13V4.500h9"/>';
const block = (x, y, w, h) => `<path fill="#4850f4" stroke="#000050" d="M${x + .5} ${y + .5}h${w}v${h}h-${w}z"/><path stroke="#a0a8ff" d="M${x + 1} ${y + 1.5}h${w - 1}"/>`;
const icons = {
  out: block(1, 3, 7, 10) + '<path fill="#000" d="M5 5h4v6H5z"/><path fill="#ff0" d="M6 7h6V4l6 4.500-6 4.500v-3H6z"/>',
  in: block(9, 3, 7, 10) + '<path fill="#ff0" stroke="#000" stroke-width=".7" d="M0 7h7V3.500l5.500 5L7 13v-3H0z"/>',
  sig: block(3, 3, 11, 10) + '<path fill="none" stroke="#fff" stroke-width="1.300" d="M5 10.500h2v-4h4v4h2"/><path fill="#ff0" d="M0 6h2v5H0zM16 6h2v5h-2z"/>',
  bsig: '<path stroke="#ff0" stroke-width="2" stroke-dasharray="2 1" d="M0 4l6 8"/><path fill="none" stroke="#8c90ff" d="M4 8V1.500h8M6 10V4.500h8"/>' + block(7, 6, 8, 8) + '<path fill="none" stroke="#fff" d="M9 12.500h1.500v-3h3v3H15"/><path fill="#ff0" d="M17 10h2v3h-2z"/>',
  bout: stack + block(5, 6, 7, 8) + '<path fill="#ff0" stroke="#000" stroke-width=".6" d="M12 9.500h3V7l4 4-4 4v-3h-3z"/>',
  bin: '<path fill="none" stroke="#8c90ff" d="M4 8V1.500h9M6 10V4.500h9"/>' + block(8, 6, 7, 8) + '<path fill="#ff0" stroke="#000" stroke-width=".6" d="M0 9.500h6V6.500l5 4.500-5 4.500v-3H0z"/>',
  grp: block(4, 2, 6, 11) + '<path fill="#aaa" d="M0 3h3v3H0zM0 7h3v2H0zM0 10h3v3H0zM12 3h3v3h-3zM16 3h3v3h-3zM12 7h3v2h-3zM16 7h3v2h-3zM12 10h3v3h-3zM16 10h3v3h-3z"/>'
};

const names = document.getElementById('names'), vals = document.getElementById('vals');
let left = '', right = '';
rows.forEach((r, i) => {
  const [name, lvl, icon, val, , shade, exp, h] = r;
  const cls = 'row' + (shade === 1 ? ' g' : shade === 2 ? ' picked' : '') + (h ? ' short' : '') + (i ? '' : ' cut');
  const H = h || 18, X = lvl ? 17 : 9, ink = shade === 2 ? '#000' : '#fff';
  const nested = lvl && name !== 'hllsc_req';
  let s = `<path stroke="#ddd" stroke-dasharray="1 1" d="M9.500 0v${H}${lvl ? `M17.500 0v${nested ? H : 9}` : ''}${exp === '-' ? 'M17.500 10v6' : ''}M${X} 9.500h14"/>`;
  if (exp) s += `<path fill="${shade === 1 ? '#333' : shade === 2 ? '#ffffb4' : '#000'}" stroke="${ink}" d="M${X - 3.5} 5.500h8v8h-8z"/><path stroke="${ink}" d="M${X - 2} 9.500h5${exp === '+' ? `M${X + .5} 7v5` : ''}"/>`;
  left += `<div class="${cls}">${name === 'hburst[2:0]' ? '<div class="drop"></div>' : ''}<svg width="${lvl ? 55 : 47}" height="${H}">${s}<g transform="translate(${lvl ? 31 : 23} 1)">${icons[icon]}</g></svg><span>${name}</span></div>`;
  right += `<div class="${cls}"><span>${val}</span>${name === 'cmd_fifo_rdata[41:0]' ? '<svg width="5" height="18"><path fill="#fff" d="M0 5l5 4.500-5 4.500z"/></svg>' : ''}</div>`;
});
names.innerHTML = left;
vals.innerHTML = right;

// Waveform canvas
const G = '#00ff00', END = 1262;
let bands = '', lines = '', text = '', y = 251;
for (const r of rows) {
  const w = r[4], H = r[7] || 18, hi = y + 2.5, lo = y + 15.5;
  if (r[5]) bands += `<path fill="#333" d="M300 ${y}h962v${H}H300z"/>`;
  const put = (d, c = G, k = 1) => lines += `<path fill="none" stroke="${c}" stroke-width="${k}" d="${d}"/>`;
  if (w === 0 || w === 1) put(`M300 ${w ? hi : lo}H${END}`);
  else if (w === 'clk') {
    let d = `M300 ${hi}`;
    for (let n = -7; n < 56; n++) {
      const a = Math.round(406 + n * 15.655), f = Math.round(406 + (n + .5) * 15.655);
      if (a > 300) d += `H${a + .5}V${hi}`;
      if (f > 300) d += `H${f + .5}V${lo}`;
    }
    put(d);
  } else if (w && w.e) {
    let v = w.s, d = `M300 ${v ? hi : lo}`;
    for (const x of w.e) { v = 1 - v; d += `H${x + .5}V${v ? hi : lo}`; }
    put(d + `H${END}`);
  } else if (w) {
    const o = w.w ? -.5 : 0, a = hi + o, b = lo + o;
    let d = '', x0 = 300;
    text += `<text class="wt" x="301.300" y="${y + 13}">${w.b}</text>`;
    for (const [x, label] of w.t) {
      d += `M${x0} ${a}H${x - 1.5}L${x + 2.5} ${b}M${x0} ${b}H${x - 1.5}L${x + 2.5} ${a}`;
      x0 = x + 2.5;
      text += `<text class="wt" x="${x + (label.length > 1 ? 5 : 5.5)}" y="${y + 13}">${label}</text>`;
    }
    put(d + `M${x0} ${a}H${END}M${x0} ${b}H${END}`, w.c, w.w);
  }
  y += H;
}
const cursors = '<path stroke="#f00" d="M406.500 216V939M860.500 198V939"/>';
let scale = '<path d="M300 181h962v73H300z"/><path stroke="#fff" d="M300 253.500H1262"/>';
for (let n = -2; n < 18; n++) {
  const x = Math.round(431.1 + n * 46.93) + .5;
  if (n % 5 === 0) scale += `<path stroke="#fff" d="M${x} 234V253"/><text class="wr" x="${x + 1.5}" y="246">56,${300 + n * 20}ns</text>`;
  else scale += `<path stroke="#fff" d="M${x} 251V253"/>`;
}
const flag = (x, yy, w, t) => `<path fill="#f00" d="M${x} ${yy}h${w}v18h-${w}z"/><path fill="none" stroke="#ff8080" d="M${x + .5} ${yy + 18}V${yy + .5}H${x + w}"/><path fill="none" stroke="#900" d="M${x + 1} ${yy + 17.5}H${x + w - .5}V${yy + 1}"/><text class="wr" x="${x + 2.5}" y="${yy + 14}">${t}</text>`;
const pointer = '<path stroke="#fff" d="M419.500 392.500v15l3.500-3 3 6 2.500-1-2.500-6h5z"/>';
document.getElementById('wave').innerHTML = '<path d="M300 181h962v758H300z"/>' + bands + scale + cursors + lines + text
  + flag(406, 216, 130, 'TimeA = 56,289.437ns') + flag(860, 198, 144, 'Baseline = 56,482.751ns') + pointer;

// Overview ruler
let r = '<path fill="#868686" d="M300 939h962v2H300z"/><path fill="#bdbdbd" d="M301 941h20v18h-20zM1242 941h20v18h-20z"/><path fill="#ddd" stroke="#777" d="M318 942v15l-15-7zM1245 942v15l15-7z"/><path d="M322 941h920v17H322z"/><path stroke="#fff" d="M321.500 941v17"/><path stroke="#868686" d="M300 959.500h962"/>';
for (let n = 1; n < 29; n++) {
  const x = Math.round(321 + n * 32.06) + .5;
  if (n % 5 === 0) r += `<path stroke="#fff" d="M${x} 945v12"/><text class="wt" x="${x + 1.5}" y="954" textLength="33">${n * 2},000</text>`;
  else r += `<path stroke="#fff" d="M${x} 956v2"/>`;
}
r += '<text class="wt" x="322.500" y="954">0</text><text class="wt" x="1180" y="954" textLength="60">57,292.675ns</text><path fill="#ddd" stroke="#666" d="M1221.500 943h11v10l-5 4-6-4zM1217 958l4-6 5 6zM1229 958l5-6 5 6z"/>';
document.getElementById('ruler').innerHTML = r;
})();
```
